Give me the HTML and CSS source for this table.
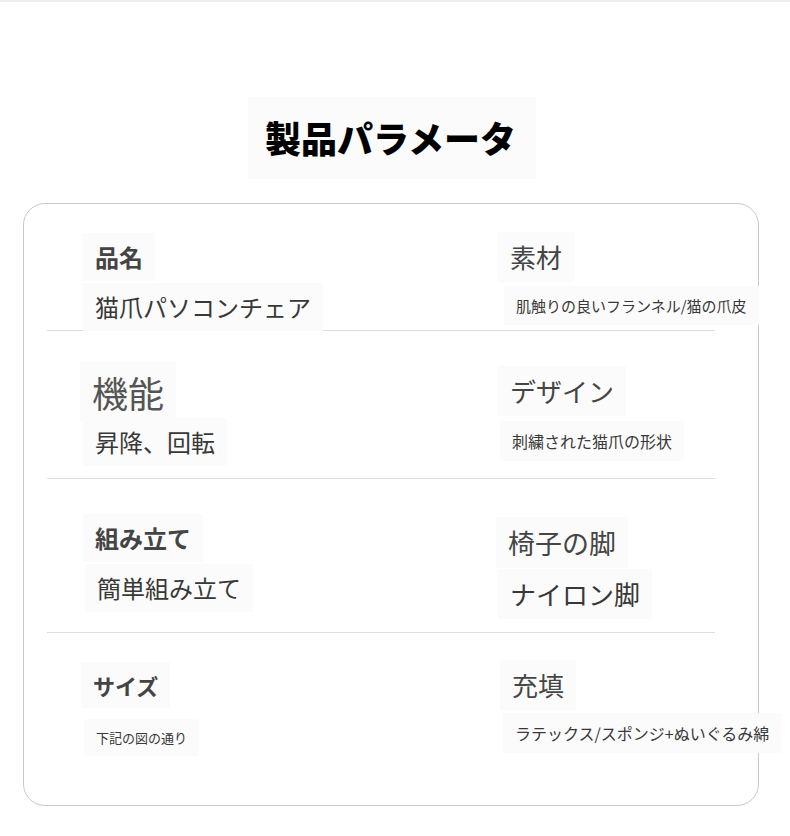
FILE: index.html
```html
<!DOCTYPE html>
<html lang="ja">
<head>
<meta charset="utf-8">
<title>製品パラメータ</title>
<link rel="stylesheet" href="styles.css">
</head>
<body>
<div class="topline"></div>
<h1 class="title">製品パラメータ</h1>
<section class="card">
  <div class="row row-1">
    <div class="cell left c1l">
      <span class="txt bold s24">品名</span>
      <span class="txt val s24 g26">猫爪パソコンチェア</span>
    </div>
    <div class="cell right c1r">
      <span class="txt s26">素材</span>
      <span class="txt val s15 g28 shift6">肌触りの良いフランネル/猫の爪皮</span>
    </div>
  </div>
  <div class="row row-2">
    <div class="cell left c2l">
      <span class="txt big s36 back3">機能</span>
      <span class="txt val s24 g20">昇降、回転</span>
    </div>
    <div class="cell right c2r">
      <span class="txt s26">デザイン</span>
      <span class="txt val s16 g29 shift2">刺繍された猫爪の形状</span>
    </div>
  </div>
  <div class="row row-3">
    <div class="cell left c3l">
      <span class="txt bold s24">組み立て</span>
      <span class="txt val s24 g26 shift2">簡単組み立て</span>
    </div>
    <div class="cell right c3r">
      <span class="txt s27 back2">椅子の脚</span>
      <span class="txt val s26 g25">ナイロン脚</span>
    </div>
  </div>
  <div class="row row-4">
    <div class="cell left c4l">
      <span class="txt bold s22 back2">サイズ</span>
      <span class="txt val s13 g35 shift1">下記の図の通り</span>
    </div>
    <div class="cell right c4r">
      <span class="txt s26 shift2">充填</span>
      <span class="txt val s16 g27 shift5">ラテックス/スポンジ+ぬいぐるみ綿</span>
    </div>
  </div>
</section>
</body>
</html>
```
FILE: styles.css
```css
* { box-sizing: border-box; }
html, body { margin: 0; padding: 0; background: #fff; }
body {
  font-family: "Noto Sans CJK JP", "Noto Sans", sans-serif;
  color: #444;
  width: 790px;
  height: 836px;
  overflow: hidden;
}
.topline { height: 2px; background: #eeeeee; }
.title {
  width: fit-content;
  margin: 95px 0 0 248px;
  padding: 22px 20px 24px 17px;
  background: #fbfbfb;
  font-size: 36px;
  line-height: 1;
  font-weight: 900;
  color: #000;
}
.card {
  margin: 24px 0 0 23px;
  width: 736px;
  height: 603px;
  border: 1px solid #c9c9c9;
  border-radius: 22px;
  padding-left: 23px;
}
.row {
  width: 668px;
  display: grid;
  grid-template-columns: 463px 1fr;
  border-bottom: 1px solid #dedede;
}
.row-1 { height: 127px; }
.row-2 { height: 148px; }
.row-3 { height: 154px; }
.row-4 { height: 171px; border-bottom: none; }
.cell { display: flex; flex-direction: column; align-items: flex-start; }
.left { padding-left: 48px; }
.right { padding-left: 0; }
.c1l { padding-top: 41px; }
.c1r { padding-top: 40px; }
.c2l { padding-top: 43px; }
.c2r { padding-top: 47px; }
.c3l { padding-top: 47px; }
.c3r { padding-top: 50px; }
.c4l { padding-top: 41px; }
.c4r { padding-top: 39px; }
.txt {
  display: block;
  line-height: 1;
  white-space: nowrap;
  background: #fbfbfb;
  box-shadow: 0 0 0 12px #fbfbfb;
  color: #454545;
}
.val { color: #383838; }
.bold { font-weight: 700; color: #444; }
.big { color: #555; }
.s13 { font-size: 13px; }
.s15 { font-size: 15px; }
.s16 { font-size: 16px; }
.s22 { font-size: 22px; }
.s24 { font-size: 24px; }
.s26 { font-size: 26px; }
.s27 { font-size: 27px; }
.s36 { font-size: 36px; }
.g20 { margin-top: 20px; }
.g25 { margin-top: 25px; }
.g26 { margin-top: 26px; }
.g27 { margin-top: 27px; }
.g28 { margin-top: 28px; }
.g29 { margin-top: 29px; }
.g35 { margin-top: 35px; }
.shift1 { margin-left: 1px; }
.shift2 { margin-left: 2px; }
.shift5 { margin-left: 5px; }
.shift6 { margin-left: 6px; }
.back2 { margin-left: -2px; }
.back3 { margin-left: -3px; }
```
